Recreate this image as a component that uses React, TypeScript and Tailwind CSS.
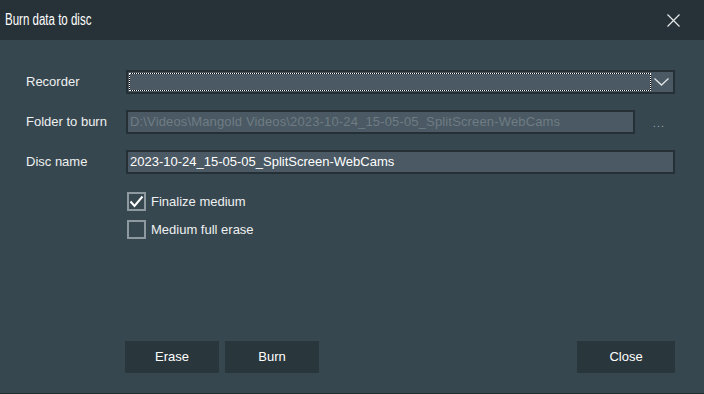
import React from "react";

const ui = { fontFamily: '"Liberation Sans", Arial, sans-serif' };

function Check({ checked, label }: { checked: boolean; label: string }) {
  return (
    <div className="flex items-center gap-[5px] h-[19px]">
      <div className="w-[19px] h-[19px] border-2 border-[#8d999f] flex items-center justify-center">
        {checked && (
          <svg width="15" height="13" viewBox="0 0 15 13">
            <path d="M1.5 6.5 L5.5 11 L13.5 1.5" stroke="#ffffff" strokeWidth="2" fill="none" />
          </svg>
        )}
      </div>
      <span className="text-[13px] text-[#eef0f1]">{label}</span>
    </div>
  );
}

export default function App() {
  return (
    <div className="w-[704px] h-[394px] flex flex-col bg-[#37474f] border-b border-[#222c31]" style={ui}>
      <div className="h-[40px] bg-[#273238] flex items-center justify-between pl-[5px] pr-[24px] shrink-0">
        <span className="text-[16px] text-white inline-block origin-left scale-x-[0.72] whitespace-nowrap">
          Burn data to disc
        </span>
        <svg width="13" height="13" viewBox="0 0 13 13">
          <path d="M0.5 0.5 L12.5 12.5 M12.5 0.5 L0.5 12.5" stroke="#e6e9ea" strokeWidth="1.2" />
        </svg>
      </div>
      <div className="flex-1 flex flex-col pl-[26px] pr-[29px] pt-[30px]">
        <div className="flex flex-col gap-[16px]">
          <div className="flex items-center h-[24px]">
            <span className="w-[100px] text-[13px] text-[#eef0f1]">Recorder</span>
            <div className="flex-1 h-[24px] border-2 border-[#243036] bg-[#4a5963] flex p-[1px]">
              <div className="flex-1 border border-dotted border-white bg-black">
                <div className="w-full h-full bg-[#4a5963]" />
              </div>
              <div className="w-[21px] flex items-center justify-center">
                <svg width="15" height="8" viewBox="0 0 15 8">
                  <path d="M0.5 0.5 L7.5 7 L14.5 0.5" stroke="#dfe3e5" strokeWidth="1.3" fill="none" />
                </svg>
              </div>
            </div>
          </div>
          <div className="flex items-center h-[24px]">
            <span className="w-[100px] text-[13px] text-[#eef0f1]">Folder to burn</span>
            <div className="flex-1 h-[24px] border-2 border-[#243036] bg-[#4a5963] flex items-center pl-[2px] text-[13px] tracking-[0.15px] text-[#6f7c83] overflow-hidden whitespace-nowrap">
              D:\Videos\Mangold Videos\2023-10-24_15-05-05_SplitScreen-WebCams
            </div>
            <div className="w-[40px] h-[24px] flex items-end justify-end pr-[10px] pb-[3px] text-[11px] text-[#9aa6ac] tracking-[1px]">
              ...
            </div>
          </div>
          <div className="flex items-center h-[24px]">
            <span className="w-[100px] text-[13px] text-[#eef0f1]">Disc name</span>
            <div className="flex-1 h-[24px] border-2 border-[#243036] bg-[#4a5963] flex items-center pl-[2px] text-[13px] text-white overflow-hidden whitespace-nowrap">
              2023-10-24_15-05-05_SplitScreen-WebCams
            </div>
          </div>
        </div>
        <div className="flex flex-col gap-[9px] mt-[18px] pl-[101px]">
          <Check checked label="Finalize medium" />
          <Check checked={false} label="Medium full erase" />
        </div>
        <div className="flex-1" />
        <div className="flex items-center pl-[99px] pb-[20px]">
          <button className="w-[94px] h-[32px] bg-[#29363c] text-[13px] text-white">Erase</button>
          <button className="w-[94px] h-[32px] bg-[#29363c] text-[13px] text-white ml-[6px]">Burn</button>
          <div className="flex-1" />
          <button className="w-[98px] h-[32px] bg-[#29363c] text-[13px] text-white">Close</button>
        </div>
      </div>
    </div>
  );
}
